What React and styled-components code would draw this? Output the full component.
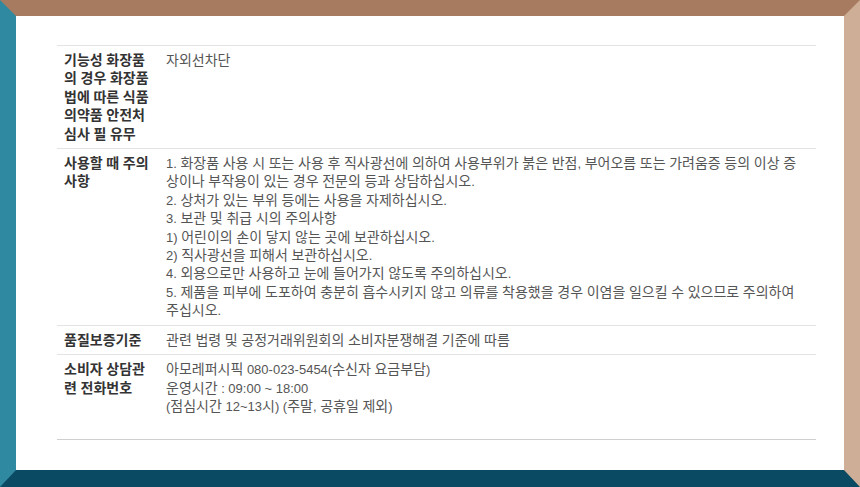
import React from 'react';
import styled, { createGlobalStyle } from 'styled-components';

const GlobalStyle = createGlobalStyle`
  html, body {
    margin: 0;
    padding: 0;
    background: #ffffff;
  }
  * {
    box-sizing: border-box;
  }
`

const S = {}

S.Frame = styled.div`
  width: 100vw;
  height: 100vh;
  border-style: solid;
  border-width: 16px 16px 17px 16px;
  border-top-color: #a67b5f;
  border-left-color: #2f89a0;
  border-right-color: #cfae98;
  border-bottom-color: #0b4a63;
  background: #ffffff;
  padding: 29px 28px 0 41px;
  font-family: "Liberation Sans", "Noto Sans CJK KR", sans-serif;
  font-size: 13px;
  line-height: 18.4px;
  overflow: hidden;
`

S.Table = styled.div`
  border-top: 1px solid #e3e3e3;
  border-bottom: 1px solid #cfcfcf;
`

S.Row = styled.div`
  display: grid;
  grid-template-columns: 101px 1fr;
  border-bottom: 1px solid #e3e3e3;

  &:last-child {
    border-bottom: none;
  }
`

S.Label = styled.div`
  padding: 6px 6px 4px 7px;
  font-weight: bold;
  color: #333333;
`

S.Value = styled.div`
  padding: 6px 8px ${p => (p.$tail ? '23px' : '4px')} 8px;
  color: #555555;
`

S.Line = styled.div`
  margin: 0;
`

S.Ko = styled.span`
  font-family: "Noto Sans CJK KR", sans-serif;
  font-size: 14px;
  line-height: 14px;
`

const HANGUL = /([\uAC00-\uD7A3\u3131-\u318E]+)/

const ko = text =>
  text.split(HANGUL).map((part, i) =>
    HANGUL.test(part) ? <S.Ko key={i}>{part}</S.Ko> : part
  )

const rows = [
  {
    label: '기능성 화장품의 경우 화장품법에 따른 식품의약품 안전처 심사 필 유무',
    lines: ['자외선차단'],
  },
  {
    label: '사용할 때 주의사항',
    lines: [
      '1. 화장품 사용 시 또는 사용 후 직사광선에 의하여 사용부위가 붉은 반점, 부어오름 또는 가려움증 등의 이상 증상이나 부작용이 있는 경우 전문의 등과 상담하십시오.',
      '2. 상처가 있는 부위 등에는 사용을 자제하십시오.',
      '3. 보관 및 취급 시의 주의사항',
      '1) 어린이의 손이 닿지 않는 곳에 보관하십시오.',
      '2) 직사광선을 피해서 보관하십시오.',
      '4. 외용으로만 사용하고 눈에 들어가지 않도록 주의하십시오.',
      '5. 제품을 피부에 도포하여 충분히 흡수시키지 않고 의류를 착용했을 경우 이염을 일으킬 수 있으므로 주의하여 주십시오.',
    ],
  },
  {
    label: '품질보증기준',
    lines: ['관련 법령 및 공정거래위원회의 소비자분쟁해결 기준에 따름'],
  },
  {
    label: '소비자 상담관련 전화번호',
    lines: [
      '아모레퍼시픽 080-023-5454(수신자 요금부담)',
      '운영시간 : 09:00 ~ 18:00',
      '(점심시간 12~13시) (주말, 공휴일 제외)',
    ],
    tail: true,
  },
]

export default function App() {
  return (
    <>
      <GlobalStyle />
      <S.Frame>
        <S.Table>
          {rows.map((row, i) => (
            <S.Row key={i}>
              <S.Label>{ko(row.label)}</S.Label>
              <S.Value $tail={row.tail}>
                {row.lines.map((line, j) => (
                  <S.Line key={j}>{ko(line)}</S.Line>
                ))}
              </S.Value>
            </S.Row>
          ))}
        </S.Table>
      </S.Frame>
    </>
  )
}
